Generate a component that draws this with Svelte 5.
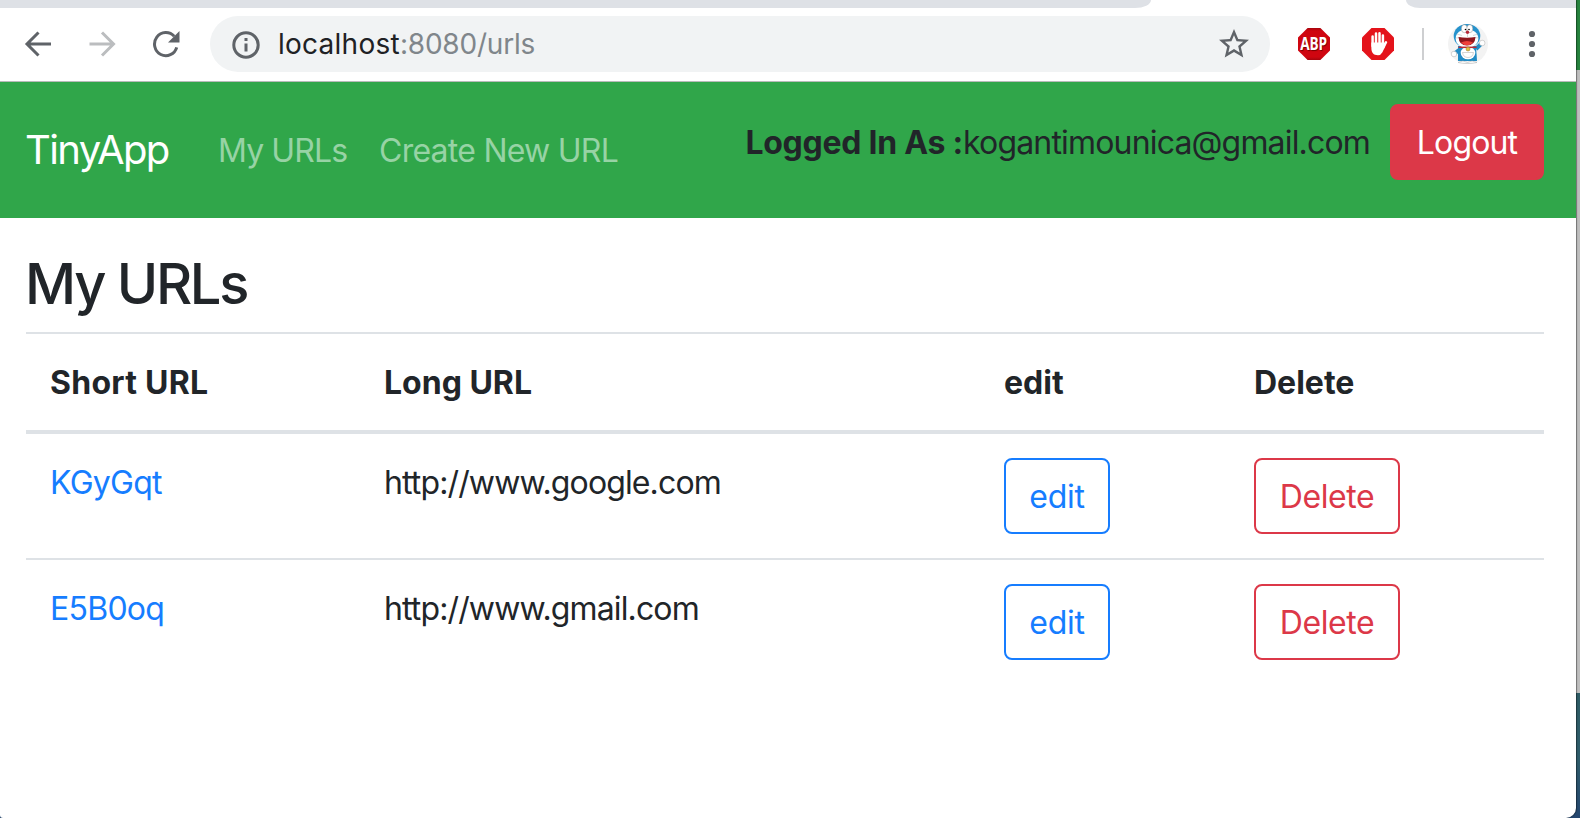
<script>
  const columns = ['Short URL', 'Long URL', 'edit', 'Delete'];
  const urls = [
    { short: 'KGyGqt', long: 'http://www.google.com' },
    { short: 'E5B0oq', long: 'http://www.gmail.com' }
  ];
</script>

<div class="desktop">
  <div class="window">
    <div class="tabs"><i class="left"></i><i class="right"></i></div>
    <header class="toolbar">
      <svg class="back" width="28" height="28" viewBox="0 0 28 28"><path d="M27 14H3.500M14.500 2.5 3 14 14.500 25.5" /></svg>
      <svg class="forward" width="28" height="28" viewBox="0 0 28 28"><path d="M1.5 14H25M14 2.5 25.5 14 14 25.5" /></svg>
      <svg class="reload" width="28" height="28" viewBox="0 0 28 28"><path d="M22.2 6.3A11.3 11.6 0 1 0 24.7 17.3" /><path class="arrowhead" d="M27.5 1v11.5H16z" /></svg>
      <div class="omnibox">
        <svg class="info" width="28" height="28" viewBox="0 0 28 28"><circle cx="14" cy="14" r="12.2" /><path d="M14 12.5v8M14 7v3" /></svg>
        <span class="address"><b>localhost</b>:8080/urls</span>
        <svg class="star" width="36" height="36" viewBox="0 0 24 24"><path d="M22 9.24l-7.19-.62L12 2 9.19 8.63 2 9.24l5.46 4.73L5.82 21 12 17.27 18.18 21l-1.63-7.03L22 9.24zM12 15.4l-3.76 2.27 1-4.28-3.32-2.88 4.38-.38L12 6.1l1.71 4.04 4.38.38-3.32 2.88 1 4.28L12 15.4z" /></svg>
      </div>
      <div class="abp"><span>ABP</span></div>
      <svg class="hand" width="32" height="32" viewBox="0 0 32 32">
        <path d="M9.5 0h13L32 9.5v13L22.5 32h-13L0 22.5v-13z" fill="#e4131b" />
        <g fill="none" stroke="#fff" stroke-width="2.5" stroke-linecap="round"><path d="M10.6 8.500V18M14 5.500V17M17.500 5.300V17M20.900 7.500V18M24 14.300l-3 6" /></g>
        <path d="M9.350 14.500h12.800v3.500l1.300-.500-3 6.800Q18.800 27.300 16 27.300c-4.600 0-6.650-2.700-6.650-7.500z" fill="#fff" />
      </svg>
      <i class="divider"></i>
      <svg class="avatar" width="40" height="40" viewBox="0 0 40 40">
        <circle cx="20" cy="20" r="20" fill="#f3f3f3" />
        <path d="M11 26 6 30M28 25l5-5" stroke="#218bc5" stroke-width="4" />
        <path d="M10 22h18l1 15H10z" fill="#218bc5" />
        <ellipse cx="19" cy="12" rx="13.3" ry="12" fill="#2592cc" />
        <ellipse cx="19" cy="14.500" rx="11.300" ry="9.500" fill="#fff" />
        <ellipse cx="16.3" cy="4.7" rx="3" ry="4" fill="#fff" stroke="#777" stroke-width=".4" />
        <ellipse cx="21.8" cy="4.7" rx="3" ry="4" fill="#fff" stroke="#777" stroke-width=".4" />
        <circle cx="17.5" cy="5.5" r=".8" /><circle cx="21" cy="5.5" r=".8" />
        <circle cx="19.5" cy="8.2" r="1.7" fill="#b52838" />
        <path d="M19.5 10v3M9 10l5 1.5M8 14l5-.5M30 10l-5 1.5M31 14l-5-.5" stroke="#999" stroke-width=".4" />
        <path d="M10.500 13q8.500 1.500 17 0-.5 8.500-8.500 8.500t-8.500-8.500z" fill="#8f171e" />
        <path d="M13 18.500q6-3 12 0-2.500 2.800-6 2.800t-6-2.800z" fill="#ee4039" />
        <ellipse cx="20" cy="29" rx="7.3" ry="6.3" fill="#fff" />
        <path d="M14.500 28.500h11q-.8 5-5.500 5t-5.500-5z" fill="#fff" stroke="#aaa" stroke-width=".5" />
        <path d="M10.500 23.300h18" stroke="#bd2933" stroke-width="1.500" />
        <circle cx="20" cy="25" r="2" fill="#e3bd3d" stroke="#8c742e" stroke-width=".5" />
        <circle cx="6" cy="30" r="2.800" fill="#fff" stroke="#aaa" stroke-width=".5" />
        <circle cx="34.200" cy="19" r="2.800" fill="#fff" stroke="#aaa" stroke-width=".5" />
        <path d="M10 38.500q5-3 9.500 0 4.500-3 9.500 0-4 1-9.500 1t-9.500-1z" fill="#fff" stroke="#aaa" stroke-width=".5" />
      </svg>
      <svg class="menu" width="8" height="28" viewBox="0 0 8 28"><circle cx="4" cy="4" r="3.100" /><circle cx="4" cy="14" r="3.100" /><circle cx="4" cy="24" r="3.100" /></svg>
    </header>

    <nav>
      <span class="brand">TinyApp</span>
      <span class="link first">My URLs</span>
      <span class="link second">Create New URL</span>
      <div class="session">
        <strong>Logged In As :</strong><span class="email">kogantimounica@gmail.com</span>
        <button class="logout">Logout</button>
      </div>
    </nav>

    <main>
      <h3>My URLs</h3>
      <div class="table">
        <div class="row head">
          {#each columns as column}<strong class="cell">{column}</strong>{/each}
        </div>
        {#each urls as url}
          <div class="row">
            <span class="cell short">{url.short}</span>
            <span class="cell long">{url.long}</span>
            <span class="cell"><button class="edit">edit</button></span>
            <span class="cell"><button class="delete">Delete</button></span>
          </div>
        {/each}
      </div>
    </main>
  </div>
</div>

<style>
  :global(body) { margin: 0; }
  * { box-sizing: border-box; }
  .desktop { width: 1580px; height: 818px; overflow: hidden; font: 32px/48px Inter, sans-serif; color: #212529; background: linear-gradient(#27833e 0 70px, #bebebe 70px 693px, #2e5c65 693px, #2f5c6b 760px, #24466f 818px); }
  .window { width: 1576px; height: 818px; background: #fff; border-radius: 0 0 10px 3px; box-shadow: 1px 0 1px #0006; overflow: hidden; }
  .tabs { height: 8px; display: flex; justify-content: space-between; }
  .tabs i { background: #dee1e6; height: 8px; }
  .left { width: 1151px; border-bottom-right-radius: 16px 8px; }
  .right { width: 170px; border-bottom-left-radius: 14px 8px; }
  .toolbar { height: 74px; border-bottom: 1px solid #b8bbb9; display: flex; align-items: center; padding: 0 0 1px 24px; }
  svg { display: block; flex: none; }
  .back, .forward, .reload, .info { fill: none; stroke: #5f6368; stroke-width: 3; }
  .forward { stroke: #bbbdbf; margin-left: 36px; }
  .reload { margin-left: 36px; }
  .reload .arrowhead { fill: #5f6368; stroke: none; }
  .omnibox { width: 1060px; height: 56px; margin-left: 30px; border-radius: 28px; background: #f1f3f4; display: flex; align-items: center; padding: 0 18px 0 22px; }
  .info { margin-top: 1px; }
  .address { font-size: 28px; line-height: 56px; letter-spacing: -.2px; color: #80868b; margin-left: 18px; flex: 1; }
  .address b { font-weight: 400; letter-spacing: .25px; color: #202124; }
  .star, .menu { fill: #5f6368; }
  .abp { flex: none; width: 32px; height: 32px; margin-left: 28px; display: flex; align-items: center; justify-content: center; background: linear-gradient(#a6050d, #cf0610 3px 29px, #a6050d); clip-path: polygon(30% 0, 70% 0, 100% 30%, 100% 70%, 70% 100%, 30% 100%, 0 70%, 0 30%); }
  .abp span { font: 700 17px/24px "Open Sans", sans-serif; letter-spacing: -.2px; color: #fff; text-shadow: 1px 1px 1px #700; transform: scaleX(.8); }
  .hand { margin-left: 32px; }
  .divider { width: 2px; height: 32px; background: #cecfd1; margin-left: 28px; }
  .avatar { margin-left: 24px; }
  .menu { margin-left: 40px; }
  nav { height: 136px; background: #30a64a; display: flex; align-items: center; padding: 2px 32px 0 26px; white-space: nowrap; }
  .brand { font-size: 40px; letter-spacing: -1.6px; color: #fff; width: 193px; margin: -2px 0 0 -1px; }
  .link { color: #97d3a5; letter-spacing: -.9px; }
  .first { width: 161px; }
  .second { letter-spacing: -.75px; }
  .session { margin: 0 0 16px auto; display: flex; align-items: center; }
  strong { font-weight: 700; }
  .session strong { letter-spacing: -.25px; }
  .email { letter-spacing: -.83px; }
  button { display: block; height: 76px; font: inherit; border: 2px solid; border-radius: 8px; background: none; padding: 2px 0 0; text-align: center; }
  .logout { width: 154px; margin: -3px 0 0 20px; color: #fff; background: #dc3848; border-color: #dc3848; letter-spacing: -.85px; }
  main { padding: 32px 32px 0 26px; }
  h3 { margin: 0 0 0 -1px; height: 82px; padding-top: 1px; font-size: 56px; line-height: 67px; font-weight: 500; letter-spacing: -2.3px; }
  .row { display: grid; grid-template-columns: 334px 620px 250px 1fr; height: 126px; border-top: 2px solid #dee2e6; padding: 24px 0; }
  .row.head { height: 98px; }
  .head + .row { border-top-width: 4px; height: 128px; }
  .cell { padding-left: 24px; white-space: nowrap; }
  .head .cell, .short, .long { padding-top: 1px; }
  .head .cell:first-child { letter-spacing: .25px; }
  .short { color: #167dff; letter-spacing: -.75px; }
  .long { letter-spacing: -.87px; }
  .edit { width: 106px; color: #167dff; letter-spacing: -.3px; }
  .delete { width: 146px; color: #dc3848; letter-spacing: -.45px; }
</style>
